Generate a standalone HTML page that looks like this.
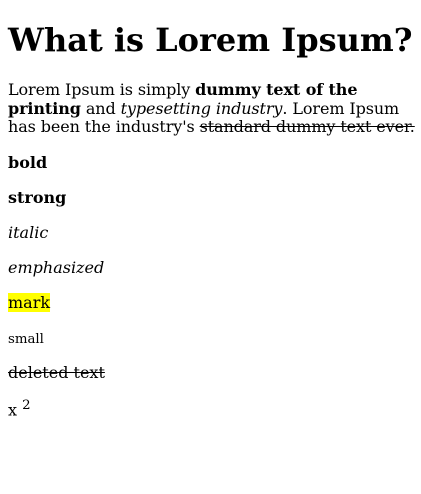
<!DOCTYPE html>
<html><head><meta charset="utf-8"><style>
html,body{margin:0;padding:0;background:#fff;}
body{margin:8px;font-family:"DejaVu Serif",serif;font-size:16px;color:#000;width:413px;}
h1{font-size:32px;margin:21.44px 0;}
p{margin:16px 0;}
p.first{line-height:18.7px;letter-spacing:-0.1px;}
mark{background:#ff0;color:#000;}
</style></head><body>
<h1>What is Lorem Ipsum?</h1>
<p class="first">Lorem Ipsum is simply <b>dummy text of the printing</b> and <i>typesetting industry</i>. Lorem Ipsum has been the industry's <del>standard dummy text ever.</del></p>
<p><b>bold</b></p>
<p><strong>strong</strong></p>
<p><i>italic</i></p>
<p><em>emphasized</em></p>
<p><mark>mark</mark></p>
<p><small>small</small></p>
<p><del>deleted text</del></p>
<p>x <sup>2</sup></p>
</body></html>
